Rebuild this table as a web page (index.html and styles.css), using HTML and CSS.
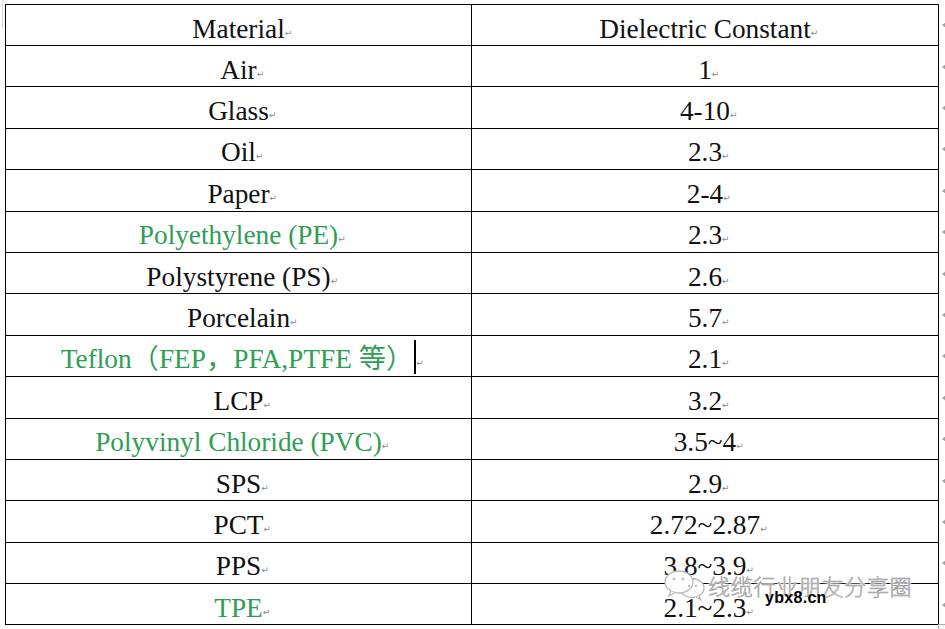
FILE: index.html
```html
<!DOCTYPE html>
<html>
<head>
<meta charset="utf-8">
<link rel="stylesheet" href="styles.css">
</head>
<body>
<div class="page">
  <div class="corner-tl"></div>
  <div class="table">
    <div class="row first"><div class="cell c1">Material<span class="pm">↵</span></div><div class="cell c2">Dielectric Constant<span class="pm">↵</span></div><div class="end"><i></i></div></div>
    <div class="row"><div class="cell c1">Air<span class="pm">↵</span></div><div class="cell c2">1<span class="pm">↵</span></div><div class="end"><i></i></div></div>
    <div class="row"><div class="cell c1">Glass<span class="pm">↵</span></div><div class="cell c2">4-10<span class="pm">↵</span></div><div class="end"><i></i></div></div>
    <div class="row"><div class="cell c1">Oil<span class="pm">↵</span></div><div class="cell c2">2.3<span class="pm">↵</span></div><div class="end"><i></i></div></div>
    <div class="row"><div class="cell c1">Paper<span class="pm">↵</span></div><div class="cell c2">2-4<span class="pm">↵</span></div><div class="end"><i></i></div></div>
    <div class="row"><div class="cell c1 green">Polyethylene (PE)<span class="pm">↵</span></div><div class="cell c2">2.3<span class="pm">↵</span></div><div class="end"><i></i></div></div>
    <div class="row"><div class="cell c1">Polystyrene (PS)<span class="pm">↵</span></div><div class="cell c2">2.6<span class="pm">↵</span></div><div class="end"><i></i></div></div>
    <div class="row"><div class="cell c1">Porcelain<span class="pm">↵</span></div><div class="cell c2">5.7<span class="pm">↵</span></div><div class="end"><i></i></div></div>
    <div class="row"><div class="cell c1 green">Teflon（FEP，PFA,PTFE 等）<span class="caret"></span><span class="pm">↵</span></div><div class="cell c2">2.1<span class="pm">↵</span></div><div class="end"><i></i></div></div>
    <div class="row"><div class="cell c1">LCP<span class="pm">↵</span></div><div class="cell c2">3.2<span class="pm">↵</span></div><div class="end"><i></i></div></div>
    <div class="row"><div class="cell c1 green">Polyvinyl Chloride (PVC)<span class="pm">↵</span></div><div class="cell c2">3.5~4<span class="pm">↵</span></div><div class="end"><i></i></div></div>
    <div class="row"><div class="cell c1">SPS<span class="pm">↵</span></div><div class="cell c2">2.9<span class="pm">↵</span></div><div class="end"><i></i></div></div>
    <div class="row"><div class="cell c1">PCT<span class="pm">↵</span></div><div class="cell c2">2.72~2.87<span class="pm">↵</span></div><div class="end"><i></i></div></div>
    <div class="row"><div class="cell c1">PPS<span class="pm">↵</span></div><div class="cell c2">3.8~3.9<span class="pm">↵</span></div><div class="end"><i></i></div></div>
    <div class="row"><div class="cell c1 green">TPE<span class="pm">↵</span></div><div class="cell c2">2.1~2.3<span class="pm">↵</span></div><div class="end"><i></i></div></div>
  </div>
  <div class="corner-br"></div>
  <div class="watermark">
    <svg class="wx" width="44" height="32" viewBox="0 0 44 32">
      <ellipse cx="29" cy="19" rx="12" ry="9.5" fill="#fff" stroke="#b8b8b8" stroke-width="1.3"/>
      <path d="M36 27 L38 31 L33 28" fill="#fff" stroke="#b8b8b8" stroke-width="1.2"/>
      <ellipse cx="16" cy="13" rx="14" ry="11" fill="#fff" stroke="#b8b8b8" stroke-width="1.3"/>
      <path d="M8 22 L6 27 L12 23.5" fill="#fff" stroke="#b8b8b8" stroke-width="1.2"/>
      <circle cx="11" cy="10" r="1.6" fill="#c4c4c4"/>
      <circle cx="20" cy="10" r="1.6" fill="#c4c4c4"/>
      <circle cx="26" cy="17" r="1.2" fill="#c4c4c4"/>
      <circle cx="33" cy="17" r="1.2" fill="#c4c4c4"/>
    </svg>
    <span class="wm-text">线缆行业朋友分享圈</span>
    <span class="wm-url">ybx8.cn</span>
  </div>
</div>
</body>
</html>
```

FILE: styles.css
```css
html, body {
  margin: 0;
  padding: 0;
  background: #fff;
}

.page {
  position: relative;
  width: 945px;
  height: 629px;
  overflow: hidden;
  padding-top: 4px;
  box-sizing: border-box;
}

.table {
  margin-left: 5px;
  font-family: "Liberation Serif", "Noto Sans CJK SC", serif;
  font-size: 27.3px;
  color: #111;
}

.row {
  display: grid;
  grid-template-columns: 467px 467px 8px;
  height: 41.4px;
}

.cell {
  box-sizing: border-box;
  border-right: 1px solid #000;
  border-bottom: 1px solid #000;
  display: flex;
  align-items: center;
  justify-content: center;
  padding-top: 8px;
  white-space: nowrap;
  line-height: 31px;
}

.c1 {
  border-left: 1px solid #000;
}

.row.first .cell {
  border-top: 1px solid #000;
}

.row.first {
  height: 42px;
}

.green {
  color: #2f9e55;
}

.pm {
  display: inline-block;
  width: 0;
  font-family: "DejaVu Sans", sans-serif;
  font-size: 9px;
  color: #8a8a8a;
  line-height: 1;
  position: relative;
  top: 4px;
  overflow: visible;
}

.caret {
  display: inline-block;
  width: 2px;
  height: 34px;
  background: #000;
  margin-left: 1px;
  align-self: flex-start;
  margin-top: -4px;
}

.end {
  display: flex;
  align-items: center;
  padding-left: 3px;
}

.end i {
  display: block;
  width: 0;
  height: 0;
  border-top: 3px solid transparent;
  border-bottom: 3px solid transparent;
  border-right: 4px solid #a0a0a0;
}

.corner-tl {
  position: absolute;
  left: 2px;
  top: 0;
  width: 3px;
  height: 28px;
  border-left: 1px solid #d8d8d8;
}

.corner-br {
  position: absolute;
  left: 938px;
  top: 624px;
  width: 6px;
  height: 6px;
  border-left: 1px solid #aaa;
  border-top: 1px solid #aaa;
}

.watermark {
  position: absolute;
  left: 663px;
  top: 569px;
  width: 260px;
  height: 40px;
}

.wx {
  position: absolute;
  left: 0;
  top: 0;
}

.wm-text {
  position: absolute;
  left: 45px;
  top: 3px;
  font-family: "Noto Sans CJK SC", sans-serif;
  font-size: 22px;
  line-height: 26px;
  letter-spacing: 0.7px;
  color: #cfcfcf;
  font-weight: 300;
  text-shadow: 0 0 3px #fff, 0 0 3px #fff, 0 0 3px #fff, 0 0 2px #fff, 0 0 1px #fff;
  -webkit-text-stroke: 0.5px #959595;
}

.wm-url {
  position: absolute;
  left: 102px;
  top: 20px;
  font-family: "Liberation Sans", sans-serif;
  font-weight: bold;
  font-size: 16px;
  line-height: 18px;
  letter-spacing: 0.3px;
  color: #000;
}
```
